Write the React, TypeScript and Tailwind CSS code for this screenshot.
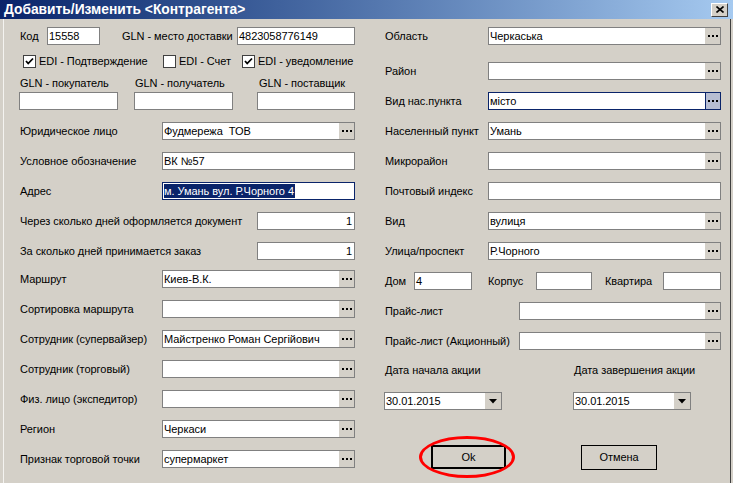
import React from "react";
import clsx from "clsx";

function Dots() {
  return (
    <div className="flex items-center gap-[2px]">
      <div className="w-[2px] h-[2px] bg-black" />
      <div className="w-[2px] h-[2px] bg-black" />
      <div className="w-[2px] h-[2px] bg-black" />
    </div>
  );
}

function Field({
  w,
  value,
  btn,
  focus,
  right,
  children,
}: {
  w: string;
  value?: string;
  btn?: boolean;
  focus?: boolean;
  right?: boolean;
  children?: React.ReactNode;
}) {
  return (
    <div
      className={clsx(
        "h-[18px] bg-white border flex items-stretch shrink-0",
        focus ? "border-[#0a246a]" : "border-[#808080]",
        w
      )}
    >
      <div
        className={clsx(
          "flex-1 flex items-center px-[1px] whitespace-pre overflow-hidden leading-none",
          right && "justify-end pr-[2px]"
        )}
      >
        {children ?? value}
      </div>
      {btn && (
        <div
          className={clsx(
            "w-[15px] flex items-center justify-center",
            focus ? "bg-[#b6bdd2] border-l border-[#0a246a]" : "bg-[#d4d0c8]"
          )}
        >
          <Dots />
        </div>
      )}
    </div>
  );
}

function Row({ label, lw, fw, value, btn, focus, right, children }: {
  label: string;
  lw: string;
  fw: string;
  value?: string;
  btn?: boolean;
  focus?: boolean;
  right?: boolean;
  children?: React.ReactNode;
}) {
  return (
    <div className="h-[18px] flex items-center">
      <div className={clsx("pl-[1px] whitespace-nowrap shrink-0", lw)}>{label}</div>
      <Field w={fw} value={value} btn={btn} focus={focus} right={right}>
        {children}
      </Field>
    </div>
  );
}

function Check({ on, label, w }: { on: boolean; label: string; w: string }) {
  return (
    <div className={clsx("flex items-center", w)}>
      <div className="w-[13px] h-[13px] bg-white border border-[#404040] flex items-center justify-center">
        {on && (
          <svg width="11" height="11" viewBox="0 0 11 11">
            <polyline points="2,5 4.2,7.5 9,2.5" fill="none" stroke="black" strokeWidth="1.8" />
          </svg>
        )}
      </div>
      <span className="ml-[3px] whitespace-nowrap">{label}</span>
    </div>
  );
}

function DateBox({ value }: { value: string }) {
  return (
    <div className="w-[118px] h-[18px] bg-white border border-[#808080] flex items-stretch">
      <div className="flex-1 flex items-center px-[1px] leading-none">{value}</div>
      <div className="w-[16px] bg-[#d4d0c8] flex items-center justify-center">
        <svg width="8" height="5" viewBox="0 0 8 5">
          <polygon points="0,0 8,0 4,4.5" fill="black" />
        </svg>
      </div>
    </div>
  );
}

export default function App() {
  return (
    <div className="w-[733px] h-[483px] bg-[#d4d0c8] overflow-hidden flex flex-col font-['Liberation_Sans',Arial,sans-serif] text-[11px] tracking-[-0.05px] text-black">
      {/* title bar */}
      <div className="h-[19px] shrink-0 bg-linear-to-r from-[#0a246a] to-[#a6caf0] flex items-center pl-[4px] pr-[5px]">
        <span className="text-white font-bold text-[13.8px] tracking-normal leading-none whitespace-nowrap">
          Добавить/Изменить &lt;Контрагента&gt;
        </span>
        <div className="ml-auto w-[17px] h-[14px] bg-[#d4d0c8] border-t border-l border-white border-r border-b border-r-[#404040] border-b-[#404040] flex items-center justify-center">
          <svg width="8" height="7" viewBox="0 0 8 7">
            <path d="M0.5 0.5 L7.5 6.5 M7.5 0.5 L0.5 6.5" stroke="black" strokeWidth="1.6" />
          </svg>
        </div>
      </div>

      <div className="flex flex-1">
        <div className="w-[3px]" />
        <div className="w-px bg-[#f4f3f0]" />

        {/* left column */}
        <div className="ml-[15px] w-[336px] pt-[8px] flex flex-col">
          <div className="h-[18px] flex items-center">
            <div className="w-[28px] pl-[1px]">Код</div>
            <Field w="w-[53px]" value="15558" />
            <div className="ml-[22px] w-[115px] whitespace-nowrap">GLN - место доставки</div>
            <Field w="w-[118px]" value="4823058776149" />
          </div>

          <div className="mt-[10px] h-[13px] flex items-center">
            <div className="w-[4px]" />
            <Check on={true} label="EDI - Подтверждение" w="w-[140px]" />
            <Check on={false} label="EDI - Счет" w="w-[79px]" />
            <Check on={true} label="EDI - уведомление" w="w-[110px]" />
          </div>

          <div className="mt-[9px] flex">
            <div className="w-[99px]">
              <div className="h-[13px] pl-[1px] leading-[13px] whitespace-nowrap">GLN - покупатель</div>
              <div className="mt-[2px]"><Field w="w-[99px]" /></div>
            </div>
            <div className="ml-[16px] w-[99px]">
              <div className="h-[13px] pl-[1px] leading-[13px] whitespace-nowrap">GLN - получатель</div>
              <div className="mt-[2px]"><Field w="w-[99px]" /></div>
            </div>
            <div className="ml-[24px] w-[98px]">
              <div className="h-[13px] pl-[2px] leading-[13px] whitespace-nowrap">GLN - поставщик</div>
              <div className="mt-[2px]"><Field w="w-[98px]" /></div>
            </div>
          </div>

          <div className="mt-[12px] flex flex-col gap-[12px]">
            <Row label="Юридическое лицо" lw="w-[143px]" fw="w-[193px]" value="Фудмережа  ТОВ" btn />
            <Row label="Условное обозначение" lw="w-[143px]" fw="w-[193px]" value="ВК №57" />
            <Row label="Адрес" lw="w-[143px]" fw="w-[193px]" focus>
              <span className="bg-[#0a246a] text-white leading-[14px] h-[14px] pr-[1px]">м. Умань вул. Р.Чорного 4</span>
            </Row>
            <Row label="Через сколько дней оформляется документ" lw="w-[238px]" fw="w-[98px]" value="1" right />
            <Row label="За сколько дней принимается заказ" lw="w-[238px]" fw="w-[98px]" value="1" right />
          </div>

          <div className="mt-[10px] flex flex-col gap-[12px]">
            <Row label="Маршрут" lw="w-[143px]" fw="w-[193px]" value="Киев-В.К." btn />
            <Row label="Сортировка маршрута" lw="w-[143px]" fw="w-[193px]" btn />
            <Row label="Сотрудник (супервайзер)" lw="w-[143px]" fw="w-[193px]" value="Майстренко Роман Сергійович" btn />
            <Row label="Сотрудник (торговый)" lw="w-[143px]" fw="w-[193px]" btn />
            <Row label="Физ. лицо (экспедитор)" lw="w-[143px]" fw="w-[193px]" btn />
            <Row label="Регион" lw="w-[143px]" fw="w-[193px]" value="Черкаси" btn />
            <Row label="Признак торговой точки" lw="w-[143px]" fw="w-[193px]" value="супермаркет" btn />
          </div>
        </div>

        {/* right column */}
        <div className="ml-[29px] w-[337px] pt-[8px] flex flex-col">
          <Row label="Область" lw="w-[104px]" fw="w-[233px]" value="Черкаська" btn />
          <div className="mt-[17px] flex flex-col gap-[12px]">
            <Row label="Район" lw="w-[104px]" fw="w-[233px]" btn />
            <Row label="Вид нас.пункта" lw="w-[104px]" fw="w-[233px]" value="місто" btn focus />
            <Row label="Населенный пункт" lw="w-[104px]" fw="w-[233px]" value="Умань" btn />
            <Row label="Микрорайон" lw="w-[104px]" fw="w-[233px]" btn />
            <Row label="Почтовый индекс" lw="w-[104px]" fw="w-[233px]" />
            <Row label="Вид" lw="w-[104px]" fw="w-[233px]" value="вулиця" btn />
            <Row label="Улица/проспект" lw="w-[104px]" fw="w-[233px]" value="Р.Чорного" btn />
            <div className="h-[18px] flex items-center">
              <div className="w-[30px] pl-[1px]">Дом</div>
              <Field w="w-[58px]" value="4" />
              <div className="ml-[16px] w-[48px]">Корпус</div>
              <Field w="w-[56px]" />
              <div className="ml-[13px] w-[58px]">Квартира</div>
              <Field w="w-[58px]" />
            </div>
            <Row label="Прайс-лист" lw="w-[135px]" fw="w-[202px]" btn />
            <Row label="Прайс-лист (Акционный)" lw="w-[135px]" fw="w-[202px]" btn />
          </div>

          <div className="mt-[14px] flex h-[13px] leading-[13px]">
            <div className="w-[189px] pl-[1px]">Дата начала акции</div>
            <div className="pl-[1px]">Дата завершения акции</div>
          </div>
          <div className="mt-[15px] flex">
            <div className="w-[189px]"><DateBox value="30.01.2015" /></div>
            <DateBox value="30.01.2015" />
          </div>

          <div className="mt-[35px] flex items-start">
            <div className="ml-[47px] relative">
              <button className="w-[75px] h-[24px] bg-[#d4d0c8] border-2 border-black flex items-center justify-center">
                Ok
              </button>
              <div className="absolute left-[-12px] top-[-9px] w-[96px] h-[42px] rounded-[50%] border-[3px] border-[#ff0000]" />
            </div>
            <button className="ml-[75px] w-[76px] h-[25px] bg-[#d4d0c8] border border-black flex items-center justify-center">
              Отмена
            </button>
          </div>
        </div>

        <div className="w-[9px]" />
        <div className="w-px bg-[#404040]" />
        <div className="w-[2px]" />
      </div>
    </div>
  );
}
